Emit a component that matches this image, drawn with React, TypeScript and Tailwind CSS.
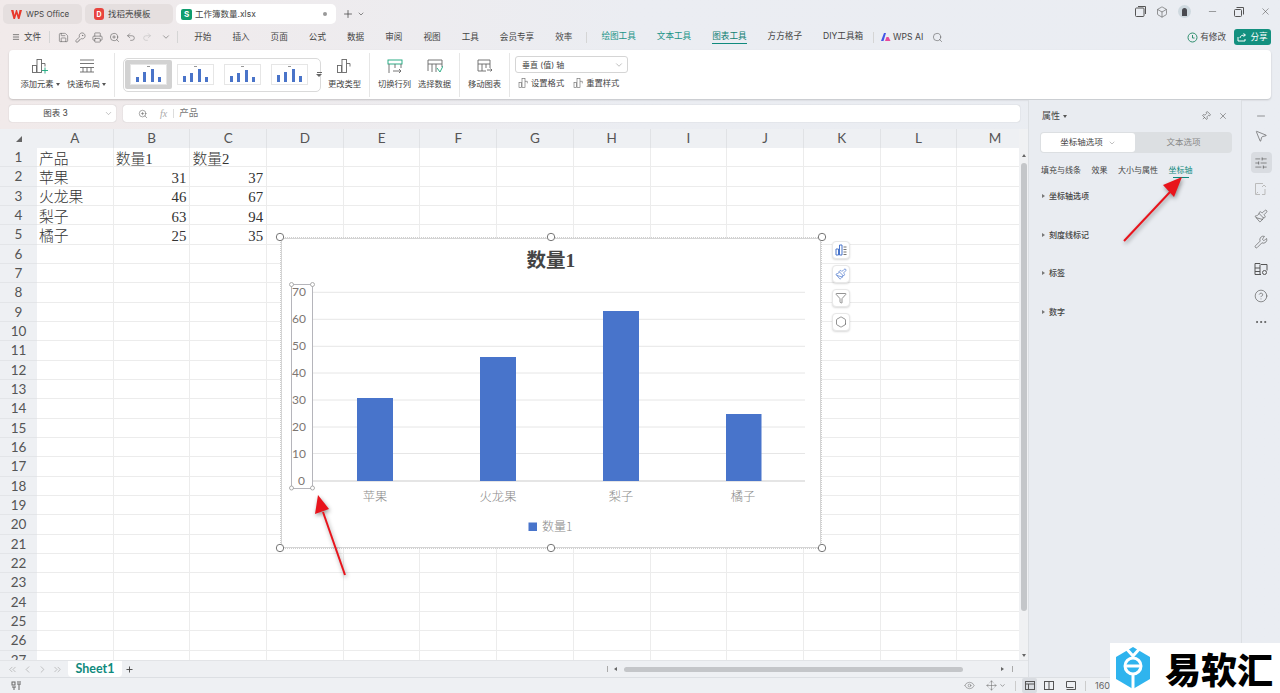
import React from "react";
import { Save, Printer, Undo2, Redo2, ChevronDown, Search, X, Minus, Pin, MousePointer2, SlidersHorizontal, Wrench, Eye, Plus, ChevronLeft, ChevronRight, ChevronsLeft, ChevronsRight, Box, CircleHelp, Ellipsis, Filter, Paintbrush, Hexagon, ZoomIn, Menu, KeyRound, Move } from "lucide-react";

const CJK = "font-['Inter','Noto_Sans_CJK_SC',sans-serif]";

function Bars({ plus = false, w = 18 }: { plus?: boolean; w?: number }) {
  return (
    <svg width={w} height={w} viewBox="0 0 18 18" fill="none" stroke="#666" strokeWidth="0.9">
      <rect x="1.5" y="8.5" width="4" height="7" />
      <rect x="6" y="2.5" width="4.5" height="13" />
      <path d="M10.5 6.5h3.5v3" />
      {plus && <path d="M14 10.5v6M11 13.5h6" stroke="#18a57a" />}
    </svg>
  );
}

function Big({ label, w, icon, caret }: { label: string; w: number; icon: React.ReactNode; caret?: boolean }) {
  return (
    <div className="flex flex-col items-center justify-start h-full pt-[7px] shrink-0" style={{ width: w }}>
      <div className="h-[18px] flex items-center justify-center">{icon}</div>
      <div className="mt-[4px] text-[8.3px] leading-[10px] text-[#444] whitespace-nowrap flex items-center">
        {label}
        {caret && <span className="ml-[2px] border-x-[2px] border-t-[3px] border-x-transparent border-t-[#555]" />}
      </div>
    </div>
  );
}

function Sep() {
  return <div className="w-px h-[44px] bg-[#e6e6e6] shrink-0" />;
}

function Thumb({ active, variant }: { active?: boolean; variant: number }) {
  const hs = [[5, 10, 13, 5], [6, 9, 13, 5], [6, 9, 12, 5], [7, 10, 13, 6]][variant];
  return (
    <div className={`w-[47px] h-[29px] flex items-center justify-center shrink-0 rounded-[2px] ${active ? "bg-[#d2d2d2]" : ""}`}>
      <div className="w-[37px] h-[21px] bg-white border border-[#e6e6e6] flex flex-col items-center pt-px">
        <div className="w-[3px] h-px bg-[#999]" />
        <div className="mt-auto w-full flex items-end justify-around px-[3px] pb-[2px]">
          {hs.map((h, i) => (
            <div key={i} className="w-[3px] bg-[#4a74c9]" style={{ height: h }} />
          ))}
        </div>
      </div>
    </div>
  );
}

const menus1 = ["开始", "插入", "页面", "公式", "数据", "审阅", "视图", "工具"];

const COLS = ["A", "B", "C", "D", "E", "F", "G", "H", "I", "J", "K", "L", "M"];
const DATA: Record<number, [string, string, string]> = {
  1: ["产品", "数量1", "数量2"],
  2: ["苹果", "31", "37"],
  3: ["火龙果", "46", "67"],
  4: ["梨子", "63", "94"],
  5: ["橘子", "25", "35"],
};

function Sheet() {
  const rows = Array.from({ length: 27 }, (_, i) => i + 1);
  return (
    <div className="flex-1 min-h-0 overflow-hidden bg-white">
      <div className="flex h-[19px]">
        <div className="w-[37px] shrink-0 bg-[#eef0f3] flex items-center justify-center">
          <div className="w-0 h-0 border-l-[6px] border-l-transparent [border-bottom:6px_solid_#666]" />
        </div>
        {COLS.map((c) => (
          <div key={c} className="w-[76.7px] shrink-0 bg-[#eef0f3] border-r border-[#e0e2e5] flex items-center justify-center text-[13.5px] text-[#555] font-['Lato',sans-serif]">
            {c}
          </div>
        ))}
      </div>
      {rows.map((r) => {
        const d = DATA[r];
        return (
          <div key={r} className="flex h-[19.33px]">
            <div className="w-[37px] shrink-0 bg-[#eef0f3] border-b border-[#e3e5e8] flex items-center justify-center text-[13.5px] text-[#555] font-['Lato',sans-serif]">
              {r}
            </div>
            {COLS.map((c, i) => {
              const v = d && i < 3 ? d[i] : "";
              const num = /^\d+$/.test(v);
              return (
                <div key={c} className={`w-[76.7px] shrink-0 border-r border-b border-[#ececec] flex items-center overflow-hidden whitespace-nowrap text-[14.8px] pt-[3px] text-[#333] font-light font-['Liberation_Serif','Noto_Sans_CJK_SC',serif] ${num ? "justify-end pr-[3px]" : "pl-[2px]"}`}>
                  {v}
                </div>
              );
            })}
          </div>
        );
      })}
    </div>
  );
}

function Handle({ x, y }: { x: number; y: number }) {
  return <circle cx={x} cy={y} r="3.7" fill="#fff" stroke="#777" strokeWidth="1" />;
}

function Small({ x, y }: { x: number; y: number }) {
  return <circle cx={x} cy={y} r="2" fill="#fff" stroke="#999" strokeWidth="0.8" />;
}

function ChartOverlay() {
  const ys = [292.3, 319.3, 346.3, 373, 400, 427, 453.5];
  const labels = ["70", "60", "50", "40", "30", "20", "10"];
  const bars = [
    { x: 357, w: 36, t: 398 },
    { x: 480, w: 36, t: 357 },
    { x: 603, w: 36, t: 311 },
    { x: 726, w: 35.5, t: 414 },
  ];
  const cats = [["苹果", 375], ["火龙果", 498], ["梨子", 621], ["橘子", 743]] as const;
  return (
    <div className="absolute left-[281px] top-[109px] w-[540px] h-[310px] bg-white border border-[#d5d5d5] outline-1 outline-dotted outline-[#cfcfcf]">
      <svg className="absolute -left-px -top-px overflow-visible" width="540" height="310" viewBox="281 238 540 310">
        <text x="551" y="267" textAnchor="middle" fontSize="19.5" fontWeight="700" fill="#444" fontFamily="'Liberation Serif','Noto Sans CJK SC',serif">数量1</text>
        {ys.map((y) => (
          <line key={y} x1="313" x2="805" y1={y} y2={y} stroke="#e6e6e6" strokeWidth="1" />
        ))}
        <line x1="313" x2="805" y1="481" y2="481" stroke="#dcdcdc" strokeWidth="1.4" />
        {bars.map((b) => (
          <rect key={b.x} x={b.x} y={b.t} width={b.w} height={481 - b.t} fill="#4874cb" />
        ))}
        {labels.map((l, i) => (
          <text key={l} x="292" y={ys[i] + 4} fontSize="12" fill="#7d7672" fontFamily="Lato,sans-serif">{l}</text>
        ))}
        <text x="298" y="485" fontSize="12" fill="#7d7672" fontFamily="Lato,sans-serif">0</text>
        {cats.map(([c, x]) => (
          <text key={c} x={x} y="501" textAnchor="middle" fontSize="12.3" fill="#8a8a8a" fontFamily="'Noto Sans CJK SC',sans-serif" fontWeight="300">{c}</text>
        ))}
        <rect x="528.5" y="522.5" width="8.5" height="8.5" fill="#4874cb" />
        <text x="542" y="531" fontSize="12" fill="#888" fontFamily="'Noto Sans CJK SC',sans-serif" fontWeight="300">数量1</text>
        <rect x="291.5" y="284.5" width="21" height="204" fill="none" stroke="#b5b5bb" strokeWidth="1" />
        <Small x={291.5} y={284.5} />
        <Small x={312.5} y={284.5} />
        <Small x={291.5} y={488} />
        <Small x={312.5} y={488} />
        <Handle x={280} y={237} />
        <Handle x={551} y={237} />
        <Handle x={822} y={237} />
        <Handle x={280} y={548} />
        <Handle x={551} y={548} />
        <Handle x={822} y={548} />
      </svg>
      <div className="absolute left-[550px] top-[2px] flex flex-col gap-[6px]">
        {[
          <svg key="a" width="12" height="12" viewBox="0 0 12 12" fill="none"><path d="M1 5h2.5v6H1zM4.5 1H7v10H4.5z" stroke="#4874cb" /><path d="M8.5 3h3M8.5 5.5h3M8.5 8h3M8.5 10.500h3" stroke="#777" /></svg>,
          <Paintbrush key="b" size={12} color="#4874cb" strokeWidth={1.4} />,
          <Filter key="c" size={12} color="#666" strokeWidth={1.4} />,
          <Hexagon key="d" size={12} color="#666" strokeWidth={1.4} />,
        ].map((ic, i) => (
          <div key={i} className="w-[18px] h-[18px] bg-white rounded-[4px] border border-[#e8e8e8] shadow-[0_1px_2px_rgba(0,0,0,0.15)] flex items-center justify-center">{ic}</div>
        ))}
      </div>
    </div>
  );
}

function Arrow({ left, top, w, h, path, head }: { left: number; top: number; w: number; h: number; path: string; head: string }) {
  return (
    <svg className="absolute drop-shadow-[1px_2px_2px_rgba(0,0,0,0.4)]" style={{ left, top }} width={w} height={h}>
      <path d={path} stroke="#e8141c" strokeWidth="2" fill="none" />
      <polygon points={head} fill="#e8141c" />
    </svg>
  );
}

function SideIcon({ children, active, className = "" }: { children: React.ReactNode; active?: boolean; className?: string }) {
  return <div className={`w-[21px] h-[21px] shrink-0 rounded-[4px] flex items-center justify-center ${active ? "bg-[#d9dce1]" : ""} ${className}`}>{children}</div>;
}

export default function App() {
  return (
    <div className={`relative w-[1280px] h-[693px] overflow-hidden flex flex-col bg-gradient-to-r from-[#f1eaea] via-[#ebedf2] to-[#eaedf2] ${CJK}`}>
      {/* title tabs */}
      <div className="h-[26px] shrink-0 flex items-start pt-[4px] pl-[3px]">
        <div className="w-[79px] h-[20px] rounded-[5px] bg-[#e5dfdf] flex items-center pl-[8px] gap-[4px] text-[8px] text-[#444]">
          <svg width="11" height="9" viewBox="0 0 11 9"><path d="M0 0h2.500l1 5 1.500-5h1l1.500 5 1-5H11L8.500 9H7L5.500 4 4 9H2.500z" fill="#e8392c" /></svg>
          WPS Office
        </div>
        <div className="ml-[3px] w-[88px] h-[20px] rounded-[5px] bg-[#e5dfdf] flex items-center pl-[9px] gap-[4px] text-[8.5px] text-[#444]">
          <div className="w-[10px] h-[12px] rounded-[3px] bg-[#e8443e] flex items-center justify-center text-white text-[7px] font-bold leading-none">D</div>
          找稻壳模板
        </div>
        <div className="ml-[3px] w-[160px] h-[20px] rounded-[5px] bg-white flex items-center pl-[5px] gap-[3px] text-[8.5px] text-[#444]">
          <div className="w-[11px] h-[11px] rounded-[2px] bg-[#0f9d6e] text-white text-[8px] font-bold flex items-center justify-center leading-none">S</div>
          工作簿数量.xlsx
          <div className="ml-auto mr-[9px] w-[4px] h-[4px] rounded-full bg-[#999]" />
        </div>
        <Plus size={12} className="ml-[6px] mt-[4px] text-[#444]" strokeWidth={1.5} />
        <ChevronDown size={8} className="ml-[3px] mt-[6px] text-[#555]" />
        <div className="ml-auto flex items-center gap-[10px] pr-[9px] text-[#555] mt-[1px]">
          <svg width="11" height="11" viewBox="0 0 11 11" fill="none" stroke="#555"><rect x="0.500" y="2" width="8.500" height="8.500" rx="1" /><path d="M3 .5h7.500V8" /></svg>
          <Box size={12} strokeWidth={1.2} />
          <div className="w-[13px] h-[13px] rounded-full bg-[#cfd9df] flex items-center justify-center mr-[6px]">
            <div className="w-[5px] h-[8px] rounded-t-full bg-[#4a4a50]" />
          </div>
          <Minus size={11} strokeWidth={1.2} className="mr-[6px]" />
          <svg width="10" height="10" viewBox="0 0 10 10" fill="none" stroke="#555" className="mr-[6px]"><rect x="0.500" y="2.500" width="7" height="7" rx="1" /><path d="M2.500 .5h7v7" /></svg>
          <X size={11} strokeWidth={1.2} />
        </div>
      </div>

      {/* menu */}
      <div className="h-[24px] shrink-0 flex items-center text-[8.6px] text-[#444] pb-[2px] whitespace-nowrap">
        <Menu size={8} className="ml-[12px]" />
        <span className="ml-[4px]">文件</span>
        <div className="ml-[8px] w-px h-[12px] bg-[#d5d5d5]" />
        <div className="ml-[8px] flex items-center gap-[6px] text-[#555]">
          <Save size={11} strokeWidth={1.2} />
          <KeyRound size={11} strokeWidth={1.2} />
          <Printer size={11} strokeWidth={1.2} />
          <ZoomIn size={11} strokeWidth={1.2} />
          <Undo2 size={10} strokeWidth={1.3} />
          <Redo2 size={10} strokeWidth={1.3} className="text-[#bbb]" />
          <ChevronDown size={10} strokeWidth={1.3} className="ml-[3px]" />
        </div>
        <div className="ml-[6px] w-px h-[12px] bg-[#d5d5d5]" />
        <div className="ml-[16px] flex gap-[21px]">
          {menus1.map((m) => <span key={m}>{m}</span>)}
          <span>会员专享</span>
          <span>效率</span>
        </div>
        <div className="ml-[14px] w-px h-[11px] bg-[#d5d5d5]" />
        <div className="ml-[14px] flex gap-[21px]">
          <span className="text-[#1b9488]">绘图工具</span>
          <span className="text-[#1b9488]">文本工具</span>
          <span className="text-[#0f7f73] border-b border-[#0f8a7d] h-[14px]">图表工具</span>
          <span>方方格子</span>
          <span>DIY工具箱</span>
        </div>
        <div className="ml-[10px] w-px h-[11px] bg-[#d5d5d5]" />
        <div className="ml-[7px] flex items-center gap-[2px]">
          <svg width="10" height="8" viewBox="0 0 10 8"><path d="M0 8 3 0h2L2.500 8z" fill="#4456e6" /><path d="M4 8l1.500-4h2L9.500 8z" fill="#e84a9a" /></svg>
          WPS AI
        </div>
        <Search size={11} strokeWidth={1.2} className="ml-[9px] text-[#555]" />
        <svg className="ml-auto" width="11" height="11" viewBox="0 0 11 11" fill="none" stroke="#2f8f6e"><circle cx="5.500" cy="5.500" r="4.500" /><path d="M5.500 3v3h2" /></svg>
        <span className="ml-[2px] mr-[8px]">有修改</span>
        <div className="mr-[9px] w-[37px] h-[16px] rounded-[3px] bg-[#13907f] text-white flex items-center justify-center gap-[3px]">
          <svg width="10" height="9" viewBox="0 0 10 9" fill="none" stroke="#fff"><path d="M1 4v4h7V6M3 5c0-2 2-3 5-3M6.500.5 8.500 2 6.500 3.500" /></svg>
          分享
        </div>
      </div>

      {/* ribbon */}
      <div className="mx-[9px] h-[49px] mb-px shrink-0 bg-white rounded-[4px] shadow-[0_1px_2px_rgba(0,0,0,0.18)] flex items-center pl-[8px]">
        <Big label="添加元素" w={46} icon={<Bars plus />} caret />
        <Big label="快速布局" w={47} caret icon={
          <svg width="16" height="14" viewBox="0 0 16 14" fill="none" stroke="#666" strokeWidth="0.9"><path d="M1 1h14M1 4.500h14M1 8.500h14M4 8.500V13M8 8.500V13M12 8.500V13M1 13h14" /></svg>
        } />
        <div className="w-[4px]" />
        <Sep />
        <div className="ml-[8px] w-[198px] h-[34px] rounded-[5px] border border-[#dadada] flex items-center justify-start pl-[1px] gap-0 relative shrink-0">
          <Thumb active variant={0} />
          <Thumb variant={1} />
          <Thumb variant={2} />
          <Thumb variant={3} />
          <div className="ml-[3px] w-[8px] flex flex-col items-center gap-[1px]">
            <div className="w-[5px] h-px bg-[#666]" />
            <div className="border-x-[3px] border-t-[3px] border-x-transparent border-t-[#666]" />
          </div>
        </div>
        <div className="w-[7px]" />
        <Big label="更改类型" w={33} icon={<Bars />} />
        <div className="w-[8px]" />
        <Sep />
        <div className="w-[8px]" />
        <Big label="切换行列" w={33} icon={
          <svg width="16" height="15" viewBox="0 0 16 15" fill="none" stroke="#666" strokeWidth="0.9"><rect x="1" y="1" width="14" height="4" stroke="#18a57a" /><path d="M2 5v9M8 5v4M14 5v4M6 12h8M12 10l2 2-2 2" /></svg>
        } />
        <div className="w-[7px]" />
        <Big label="选择数据" w={33} icon={
          <svg width="16" height="15" viewBox="0 0 16 15" fill="none" stroke="#666" strokeWidth="0.9"><path d="M1 12V1h14v7M1 5h14M5 5v8M9 5v8" /><path d="M10 9l3 4 3-6" stroke="#18a57a" /></svg>
        } />
        <div className="w-[8px]" />
        <Sep />
        <div className="w-[8px]" />
        <Big label="移动图表" w={33} icon={
          <svg width="16" height="15" viewBox="0 0 16 15" fill="none" stroke="#666" strokeWidth="0.9"><path d="M13 9V1H1v11h8M1 5h12M5 5v7M9 5v4" /><path d="M10 11h5M13.500 9.500 15 11l-1.500 1.500" /></svg>
        } />
        <div className="w-[8px]" />
        <Sep />
        <div className="ml-[5px] flex flex-col gap-[3px] h-full pt-[6px]">
          <div className="w-[113px] h-[17px] rounded-[3px] border border-[#d5d5d5] flex items-center pl-[6px] pr-[3px] text-[8px] text-[#444]">
            垂直 (值) 轴
            <ChevronDown size={10} strokeWidth={1} className="ml-auto text-[#666]" />
          </div>
          <div className="flex items-center text-[8.3px] text-[#444] pl-[3px] mt-[1px]">
            <Bars w={12} />
            <span className="ml-px">设置格式</span>
            <span className="w-[9px]" />
            <Bars w={12} />
            <span className="ml-px">重置样式</span>
          </div>
        </div>
      </div>

      {/* body */}
      <div className="flex-1 min-h-0 flex">
        <div className="w-[1029px] shrink-0 flex flex-col border-r border-[#dcdfe3]">
          <div className="h-[29px] shrink-0 flex items-start pt-[5px] pl-[9px] pr-[8px] gap-[7px]">
            <div className="w-[107px] h-[17px] bg-white rounded-[3px] shadow-[0_0_1px_rgba(0,0,0,0.3)] flex items-center text-[8.5px] text-[#444]">
              <span className="mx-auto pr-[2px]">图表 3</span>
              <ChevronDown size={9} strokeWidth={1} className="mr-[3px] text-[#666]" />
            </div>
            <div className="flex-1 h-[17px] bg-white rounded-[3px] shadow-[0_0_1px_rgba(0,0,0,0.3)] flex items-center text-[9.5px] text-[#777]">
              <ZoomIn size={10} strokeWidth={1.2} className="ml-[15px] text-[#555]" />
              <span className="ml-[12px] italic font-['Liberation_Serif',serif] text-[10px] text-[#aaa]">fx</span>
              <div className="ml-[6px] w-px h-[9px] bg-[#ddd]" />
              <span className="ml-[5px]">产品</span>
            </div>
          </div>
          <div className="relative flex-1 min-h-0 flex flex-col">
            <Sheet />
            <ChartOverlay />
            {/* vertical scrollbar */}
            <div className="absolute right-0 top-0 bottom-0 w-[9px] bg-[#f0f1f3] flex flex-col items-center pt-[25px] pb-[3px]">
              <div className="border-x-[2.5px] border-b-[3px] border-x-transparent border-b-[#666]" />
              <div className="mt-[6px] w-[6px] h-[448px] rounded-full bg-[#c4c6c9]" />
              <div className="mt-auto border-x-[2.5px] border-t-[3px] border-x-transparent border-t-[#666]" />
            </div>
          </div>
          <div className="h-[17px] shrink-0 flex items-center bg-[#eef0f3] border-t border-[#e2e4e7]">
            <div className="pl-[7px] flex items-center gap-[2px] text-[#999]">
              <ChevronsLeft size={11} strokeWidth={1.2} />
              <ChevronLeft size={11} strokeWidth={1.2} className="ml-[2px]" />
              <ChevronRight size={11} strokeWidth={1.2} className="ml-[2px]" />
              <ChevronsRight size={11} strokeWidth={1.2} className="ml-[2px]" />
            </div>
            <div className="ml-[5px] w-[54px] h-[16px] rounded-b-[4px] bg-white text-[#0f8a7d] text-[12.5px] font-bold font-['Lato',sans-serif] flex items-center justify-center">Sheet1</div>
            <Plus size={9} strokeWidth={2.4} className="ml-[3px] text-[#444]" />
            <div className="ml-[473px] w-px h-[6px] bg-[#aaa]" />
            <div className="ml-[6px] border-y-[2.5px] border-r-[3px] border-y-transparent border-r-[#666]" />
            <div className="ml-[7px] w-[339px] h-[5px] rounded-full bg-[#c4c6c9]" />
            <div className="ml-[38px] border-y-[2.5px] border-l-[3px] border-y-transparent border-l-[#666]" />
            <div className="ml-[8px] w-px h-[6px] bg-[#aaa]" />
          </div>
        </div>

        {/* property panel */}
        <div className="w-[213px] shrink-0 border-r border-[#dcdfe3] flex flex-col pl-[11px] pr-[11px] text-[#444] bg-[#e9ecf1]">
          <div className="h-[32px] shrink-0 flex items-center pl-[2px]">
            <span className="text-[9px]">属性</span>
            <span className="ml-[3px] border-x-[2px] border-t-[3px] border-x-transparent border-t-[#555]" />
            <Pin size={10} strokeWidth={1.2} className="ml-auto mr-[7px] rotate-45" />
            <X size={10} strokeWidth={1.2} className="mr-[2px]" />
          </div>
          <div className="w-[192px] h-[21px] rounded-[4px] bg-[#dcdfe2] flex items-center pl-px text-[8.5px] shrink-0">
            <div className="w-[94px] h-[19px] rounded-[3px] bg-white flex items-center justify-center gap-[5px]">
              坐标轴选项
              <ChevronDown size={8} strokeWidth={1} />
            </div>
            <div className="flex-1 text-center text-[#888]">文本选项</div>
          </div>
          <div className="mt-[11px] ml-px flex text-[8px] gap-[10.5px] shrink-0 whitespace-nowrap h-[17px] items-start">
            <span>填充与线条</span>
            <span>效果</span>
            <span>大小与属性</span>
            <span className="flex flex-col items-center text-[#0f8a7d]">
              坐标轴
              <span className="mt-[1px] w-[16px] h-px bg-[#0f8a7d]" />
            </span>
          </div>
          <div className="mt-[10px] flex flex-col gap-[28px] text-[8px]">
            {["坐标轴选项", "刻度线标记", "标签", "数字"].map((s) => (
              <div key={s} className="h-[10.500px] flex items-center font-medium">
                <span className="ml-[2px] mr-[4px] border-y-[2.5px] border-l-[3.5px] border-y-transparent border-l-[#777]" />
                {s}
              </div>
            ))}
          </div>
        </div>

        {/* right toolbar */}
        <div className="flex-1 flex flex-col items-center pt-[5px] gap-[5.6px] text-[#555]">
          <SideIcon><Minus size={12} strokeWidth={1.2} /></SideIcon>
          <SideIcon className="-mt-[6px]"><MousePointer2 size={14} strokeWidth={1.1} /></SideIcon>
          <SideIcon active><SlidersHorizontal size={14} strokeWidth={1.1} /></SideIcon>
          <SideIcon>
            <svg width="14" height="14" viewBox="0 0 14 14" fill="none" stroke="#bbb"><path d="M9 1.500H1.500V12.500H6M11 7v5.500H8" /><path d="M8 5l2-2 2 2M4 10l-1.500 1.500" /></svg>
          </SideIcon>
          <SideIcon><Paintbrush size={14} strokeWidth={1.1} /></SideIcon>
          <SideIcon><Wrench size={14} strokeWidth={1.1} /></SideIcon>
          <SideIcon>
            <svg width="14" height="14" viewBox="0 0 14 14" fill="none" stroke="#555"><path d="M1 1.500h5l1 1h6v6M1 1.500v11h6M6 2.500v10M1 6h5M1 9.500h5" /><circle cx="10.500" cy="10.500" r="2" /></svg>
          </SideIcon>
          <SideIcon><CircleHelp size={14} strokeWidth={1.1} /></SideIcon>
          <SideIcon><Ellipsis size={14} strokeWidth={1.6} /></SideIcon>
        </div>
      </div>

      {/* status bar */}
      <div className="h-[16px] shrink-0 bg-[#eef0f3] border-t border-[#dcdfe3] flex items-center text-[#666]">
        <svg className="ml-[11px]" width="12" height="10" viewBox="0 0 12 10" fill="none" stroke="#666"><rect x="1" y="1" width="3" height="3" /><path d="M6 1h4M6 3h4M8 3v6M1 6h4M3 6v3" /></svg>
        <Eye size={11} strokeWidth={1.1} className="ml-[941px]" />
        <Move size={11} strokeWidth={1.1} className="ml-[11px]" />
        <ChevronDown size={7} className="ml-[2px]" />
        <div className="ml-[9px] w-px h-[10px] bg-[#ccc]" />
        <div className="ml-[6px] w-[15px] h-[15px] bg-[#d9dce1] rounded-[2px] flex items-center justify-center">
          <svg width="10" height="9" viewBox="0 0 10 9" fill="none" stroke="#555"><rect x=".5" y=".5" width="9" height="8" /><path d="M.5 3h9M3.500 3v5.500" /></svg>
        </div>
        <svg className="ml-[7px]" width="10" height="9" viewBox="0 0 10 9" fill="none" stroke="#555"><rect x=".5" y=".5" width="9" height="8" /><path d="M5 .5v8" /></svg>
        <svg className="ml-[12px]" width="10" height="9" viewBox="0 0 10 9" fill="none" stroke="#555"><path d="M.5 6.500V.5h9v8h-9M.5 6.500h7" /></svg>
        <div className="ml-[9px] w-px h-[10px] bg-[#ccc]" />
        <span className="ml-[9px] text-[9px]">160</span>
      </div>

      {/* annotation arrows */}
      <Arrow left={310} top={490} w={45} h={92} path="M35 85 L13 22" head="8,5 5,24 19,19" />
      <Arrow left={1115} top={170} w={75} h={78} path="M9 71 L55 22" head="67,7 48,15 59,27" />

      {/* watermark */}
      <div className="absolute right-0 bottom-0 w-[170px] h-[50px] bg-white flex items-center pl-[4px]">
        <svg width="38" height="44" viewBox="0 0 38 44">
          <path d="M19 1 36 11v22L19 43 2 33V11z" fill="#2fb4ee" />
          <circle cx="19" cy="20" r="8" fill="none" stroke="#fff" strokeWidth="3" />
          <path d="M12 20h14M19 28v15M10 0l9 10 9-10" stroke="#fff" strokeWidth="3" fill="none" />
        </svg>
        <span className="ml-[13px] text-[36px] leading-none font-black text-black font-['Noto_Sans_CJK_SC',sans-serif] whitespace-nowrap">易软汇</span>
      </div>
    </div>
  );
}
